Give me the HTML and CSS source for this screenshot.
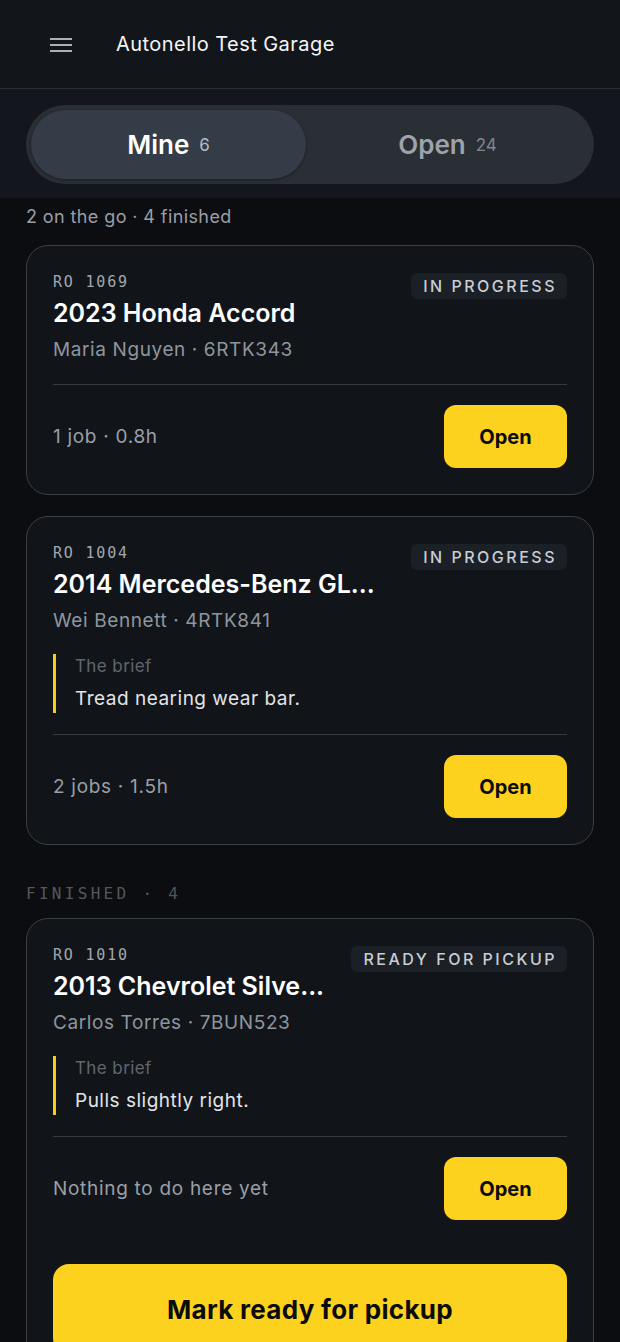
FILE: index.html
```html
<!DOCTYPE html>
<html lang="en">
<head>
  <meta charset="UTF-8" />
  <meta name="viewport" content="width=device-width, initial-scale=1.0" />
  <title>Autonello Test Garage</title>
  <link rel="stylesheet" href="styles.css">
</head>
<body>
  <header class="topbar">
    <button class="menu-btn" aria-label="Menu">
      <svg width="22" height="14" viewBox="0 0 22 14">
        <path d="M0 1h22M0 7h22M0 13h22" stroke="#aab0b8" stroke-width="2" />
      </svg>
    </button>
    <div class="topbar-title">Autonello Test Garage</div>
  </header>

  <div class="tabs-wrap">
    <div class="tabs">
      <div class="tab active">Mine <span class="tab-count">6</span></div>
      <div class="tab">Open <span class="tab-count">24</span></div>
    </div>
  </div>

  <main class="list">
    <p class="summary">2 on the go · 4 finished</p>

    <div class="card">
      <div class="card-head">
        <div class="card-info">
          <div class="ro">RO 1069</div>
          <div class="car">2023 Honda Accord</div>
          <div class="owner">Maria Nguyen · 6RTK343</div>
        </div>
        <span class="badge">IN PROGRESS</span>
      </div>
      <div class="card-foot">
        <span class="meta">1 job · 0.8h</span>
        <button class="btn-open">Open</button>
      </div>
    </div>

    <div class="card">
      <div class="card-head">
        <div class="card-info">
          <div class="ro">RO 1004</div>
          <div class="car">2014 Mercedes-Benz GL...</div>
          <div class="owner">Wei Bennett · 4RTK841</div>
        </div>
        <span class="badge">IN PROGRESS</span>
      </div>
      <div class="brief">
        <div class="brief-label">The brief</div>
        <div class="brief-text">Tread nearing wear bar.</div>
      </div>
      <div class="card-foot">
        <span class="meta">2 jobs · 1.5h</span>
        <button class="btn-open">Open</button>
      </div>
    </div>

    <h2 class="section-label">FINISHED · 4</h2>

    <div class="card">
      <div class="card-head">
        <div class="card-info">
          <div class="ro">RO 1010</div>
          <div class="car">2013 Chevrolet Silve...</div>
          <div class="owner">Carlos Torres · 7BUN523</div>
        </div>
        <span class="badge">READY FOR PICKUP</span>
      </div>
      <div class="brief">
        <div class="brief-label">The brief</div>
        <div class="brief-text">Pulls slightly right.</div>
      </div>
      <div class="card-foot">
        <span class="meta">Nothing to do here yet</span>
        <button class="btn-open">Open</button>
      </div>
      <button class="btn-big">Mark ready for pickup</button>
    </div>
  </main>
</body>
</html>
```

FILE: styles.css
```css
* {
  margin: 0;
  padding: 0;
  box-sizing: border-box;
}
body {
  background: #0b0d10;
  color: #f2f3f5;
  font-family: 'Inter', 'Noto Sans', sans-serif;
  overflow: hidden;
}
button {
  font-family: inherit;
  border: none;
  cursor: pointer;
}
.topbar {
  height: 89px;
  display: flex;
  align-items: center;
  gap: 44px;
  padding: 0 50px;
  background: #12161b;
  border-bottom: 1px solid #2a2f36;
}
.menu-btn {
  background: none;
  display: flex;
  margin-top: 2px;
}
.topbar-title {
  font-size: 20px;
  letter-spacing: 0.45px;
  color: #f4f5f7;
}
.tabs-wrap {
  background: #13171d;
  padding: 16px 26px 14px;
}
.tabs {
  display: flex;
  background: #2a2e35;
  border-radius: 40px;
  padding: 5px;
  height: 79px;
}
.tab {
  flex: 1;
  display: flex;
  align-items: center;
  justify-content: center;
  gap: 10px;
  border-radius: 35px;
  font-size: 26px;
  font-weight: 600;
  color: #9ea3ab;
}
.tab.active {
  flex: 0 0 275px;
  background: #333c47;
  color: #fff;
  box-shadow: 0 1px 3px rgba(0,0,0,0.35);
}
.tab-count {
  font-size: 17px;
  font-weight: 400;
  color: #80868e;
}
.tab.active .tab-count {
  color: #b6bcc4;
}
.list {
  padding: 7px 26px 0;
}
.summary {
  font-size: 18px;
  letter-spacing: 0.4px;
  color: #9a9fa7;
  line-height: 24px;
  margin-bottom: 16px;
}
.card {
  background: #11151a;
  border: 1.5px solid #3a3f46;
  border-radius: 22px;
  padding: 26px;
  margin-bottom: 21px;
}
.card-head {
  display: flex;
  justify-content: space-between;
  align-items: flex-start;
  gap: 28px;
}
.card-info {
  flex: 1;
  min-width: 0;
}
.ro {
  font-family: 'DejaVu Sans Mono', monospace;
  font-size: 15px;
  letter-spacing: 1.8px;
  color: #a3a7ad;
  line-height: 20px;
}
.car {
  font-size: 25px;
  font-weight: 600;
  color: #fff;
  line-height: 32px;
  margin-top: 5px;
  white-space: nowrap;
}
.owner {
  font-size: 19px;
  letter-spacing: 0.6px;
  color: #8f959d;
  line-height: 26px;
  margin-top: 8px;
}
.badge {
  flex-shrink: 0;
  background: #1b2027;
  color: #c9cdd3;
  font-size: 16px;
  font-weight: 500;
  letter-spacing: 2.5px;
  padding: 3px 10px 3px 12px;
  line-height: 20px;
  border-radius: 6px;
  margin-top: 1px;
}
.brief {
  margin-top: 20px;
  border-left: 3px solid #f5cb1c;
  padding: 2px 0 2px 19px;
}
.brief-label {
  font-size: 17px;
  letter-spacing: 0.4px;
  color: #60666e;
  line-height: 20px;
}
.brief-text {
  font-size: 19px;
  letter-spacing: 0.5px;
  color: #e2e4e7;
  line-height: 24px;
  margin-top: 11px;
}
.card-foot {
  display: flex;
  justify-content: space-between;
  align-items: center;
  margin-top: 21px;
  padding-top: 20px;
  border-top: 1.5px solid #353a41;
}
.meta {
  font-size: 19px;
  letter-spacing: 0.7px;
  color: #9a9fa7;
}
.btn-open {
  width: 123px;
  height: 63px;
  background: #fdd21f;
  color: #0b0b0b;
  border-radius: 12px;
  font-size: 20px;
  font-weight: 700;
}
.section-label {
  font-family: 'DejaVu Sans Mono', monospace;
  font-size: 16px;
  font-weight: 400;
  letter-spacing: 3.3px;
  color: #53585f;
  margin: 39px 0 14px;
  line-height: 20px;
}
.btn-big {
  display: block;
  width: 100%;
  height: 90px;
  margin-top: 44px;
  background: #fdd21f;
  color: #0b0b0b;
  border-radius: 16px;
  font-size: 26px;
  font-weight: 700;
  letter-spacing: 0.3px;
}
```
